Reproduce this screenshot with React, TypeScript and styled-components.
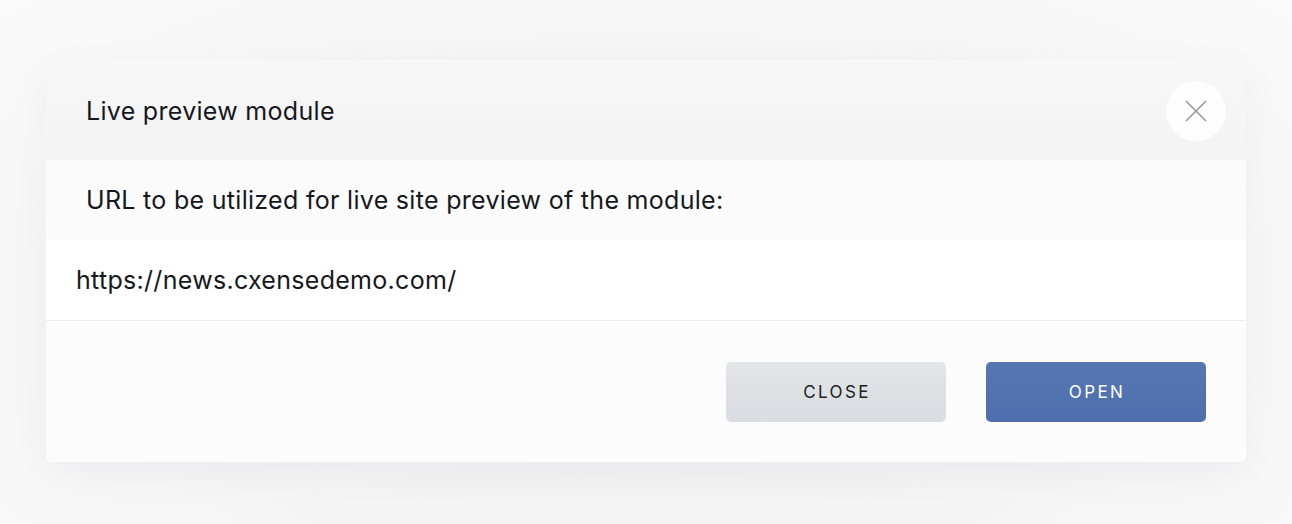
import styled, { createGlobalStyle } from "styled-components";

const GlobalStyle = createGlobalStyle`
  html, body {
    margin: 0;
    padding: 0;
    background: #f9f9fa;
    font-family: Inter, "Liberation Sans", sans-serif;
    color: #16181d;
  }
`;

const Page = styled.div`
  width: 1292px;
  height: 524px;
  box-sizing: border-box;
  padding: 60px 46px 0;
  background: radial-gradient(ellipse at 50% 60%, #efeff0 0%, #f4f4f5 55%, #fafafa 100%);
`;

const Modal = styled.div`
  width: 1200px;
  border-radius: 0 0 6px 6px;
  box-shadow: 0 12px 40px rgba(30, 35, 50, 0.04);
`;

const Header = styled.div`
  display: flex;
  align-items: center;
  justify-content: space-between;
  height: 100px;
  padding: 0 20px 0 40px;
  background: linear-gradient(180deg, #f7f7f8 0%, #f3f3f4 100%);
  border-top: 1px solid #f9f9fa;
  box-sizing: border-box;
`;

const Title = styled.h2`
  margin: 0;
  font-size: 25px;
  font-weight: 400;
  letter-spacing: 0.3px;
`;

const CloseIcon = styled.button`
  width: 60px;
  height: 60px;
  border: none;
  border-radius: 50%;
  background: #fdfdfd;
  display: flex;
  align-items: center;
  justify-content: center;
  padding: 0;
  cursor: pointer;
`;

const LabelRow = styled.div`
  height: 80px;
  display: flex;
  align-items: center;
  padding-left: 40px;
  background: #fbfbfb;
  font-size: 25px;
  letter-spacing: 0.3px;
`;

const InputRow = styled.input`
  display: block;
  width: 100%;
  height: 81px;
  box-sizing: border-box;
  padding: 0 30px;
  border: none;
  border-bottom: 1px solid #ebebeb;
  background: #ffffff;
  font-family: inherit;
  font-size: 25px;
  letter-spacing: 0.3px;
  color: #16181d;
  outline: none;
`;

const Footer = styled.div`
  display: flex;
  justify-content: flex-end;
  gap: 40px;
  padding: 41px 40px 40px;
  background: #fcfcfc;
  border-radius: 0 0 6px 6px;
`;

const Button = styled.button<{ $primary?: boolean }>`
  width: 220px;
  height: 60px;
  border: none;
  border-radius: 5px;
  font-family: inherit;
  font-size: 17px;
  letter-spacing: 2.4px;
  padding: 0 0 0 2px;
  cursor: pointer;
  color: ${(p) => (p.$primary ? "#ffffff" : "#1c1e22")};
  background: ${(p) =>
    p.$primary
      ? "linear-gradient(180deg, #5677b3 0%, #4e6ead 100%)"
      : "linear-gradient(180deg, #e3e5e8 0%, #d9dce0 100%)"};
`;

export default function App() {
  return (
    <>
      <GlobalStyle />
      <Page>
        <Modal>
          <Header>
            <Title>Live preview module</Title>
            <CloseIcon aria-label="Close">
              <svg width="22" height="22" viewBox="0 0 22 22">
                <path d="M1 1 L21 21 M21 1 L1 21" stroke="#9a9a9c" strokeWidth="1.6" />
              </svg>
            </CloseIcon>
          </Header>
          <LabelRow>URL to be utilized for live site preview of the module:</LabelRow>
          <InputRow defaultValue="https://news.cxensedemo.com/" />
          <Footer>
            <Button>CLOSE</Button>
            <Button $primary>OPEN</Button>
          </Footer>
        </Modal>
      </Page>
    </>
  );
}
